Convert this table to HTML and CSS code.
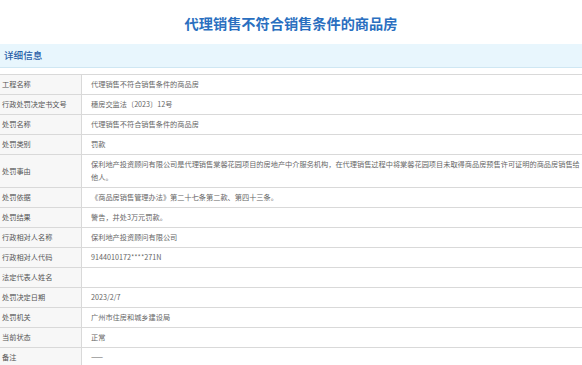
FILE: index.html
```html
<!DOCTYPE html>
<html lang="zh-CN">
<head>
<meta charset="utf-8">
<title>代理销售不符合销售条件的商品房</title>
<link rel="stylesheet" href="styles.css">
</head>
<body>
<h1 class="title">代理销售不符合销售条件的商品房</h1>
<div class="section-head">详细信息</div>
<table class="info">
  <tr><th>工程名称</th><td>代理销售不符合销售条件的商品房</td></tr>
  <tr><th>行政处罚决定书文号</th><td>穗房交监法〔2023〕12号</td></tr>
  <tr><th>处罚名称</th><td>代理销售不符合销售条件的商品房</td></tr>
  <tr><th>处罚类别</th><td>罚款</td></tr>
  <tr><th>处罚事由</th><td>保利地产投资顾问有限公司是代理销售棠馨花园项目的房地产中介服务机构，在代理销售过程中将棠馨花园项目未取得商品房预售许可证明的商品房销售给他人。</td></tr>
  <tr><th>处罚依据</th><td>《商品房销售管理办法》第二十七条第二款、第四十三条。</td></tr>
  <tr><th>处罚结果</th><td>警告，并处3万元罚款。</td></tr>
  <tr><th>行政相对人名称</th><td>保利地产投资顾问有限公司</td></tr>
  <tr><th>行政相对人代码</th><td>9144010172****271N</td></tr>
  <tr><th>法定代表人姓名</th><td></td></tr>
  <tr><th>处罚决定日期</th><td>2023/2/7</td></tr>
  <tr><th>处罚机关</th><td>广州市住房和城乡建设局</td></tr>
  <tr><th>当前状态</th><td>正常</td></tr>
  <tr><th>备注</th><td>——</td></tr>
</table>
</body>
</html>
```
FILE: styles.css
```css
html, body {
  margin: 0;
  padding: 0;
  background: #ffffff;
  font-family: "Noto Sans CJK SC", "Noto Sans", sans-serif;
}
.title {
  margin: 0;
  height: 44px;
  line-height: 46px;
  text-align: center;
  font-size: 14.2px;
  font-weight: bold;
  color: #2a6fc0;
}
.section-head {
  height: 23px;
  line-height: 23px;
  padding-left: 4px;
  background: #e8f6fd;
  border-bottom: 1px solid #cfe7f3;
  font-size: 9.6px;
  font-weight: 500;
  color: #2a5ea8;
  margin-bottom: 6px;
}
.info {
  width: 100%;
  border-collapse: collapse;
  border-top: 1px solid #d9d9d9;
}
.info th, .info td {
  border-bottom: 1px solid #d9d9d9;
  font-size: 7.2px;
  line-height: 13px;
  padding: 3px 0;
  text-align: left;
  vertical-align: middle;
  font-weight: normal;
  height: 13px;
}
.info th {
  width: 79px;
  padding-left: 2px;
  background: #f7f7f7;
  border-right: 1px solid #d9d9d9;
  color: #555555;
}
.info td {
  padding-left: 9px;
  padding-right: 2px;
  color: #666666;
}
```
